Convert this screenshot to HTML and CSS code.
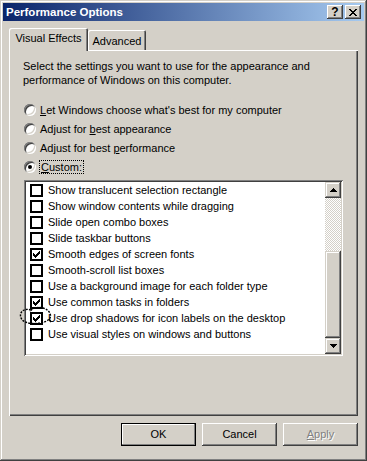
FILE: index.html
```html
<!DOCTYPE html>
<html lang="en">
<head>
    <meta charset="UTF-8">
    <title>Performance Options</title>
    <link rel="stylesheet" href="styles.css">
</head>
<body>

<div class="window">
    <div class="titlebar">
        <span class="title">Performance Options</span>
        <div class="caption-buttons">
            <div class="caption-btn help">?</div>
            <div class="caption-btn">
                <svg width="8" height="7" viewBox="0 0 8 7"><path d="M0 0h2v1h-2zM6 0h2v1h-2zM1 1h2v1h-2zM5 1h2v1h-2zM2 2h4v1h-4zM3 3h2v1h-2zM2 4h4v1h-4zM1 5h2v1h-2zM5 5h2v1h-2zM0 6h2v1h-2zM6 6h2v1h-2z" fill="#000"/></svg>
            </div>
        </div>
    </div>

    <div class="client">
        <div class="tabs">
            <div class="tab active">Visual Effects</div>
            <div class="tab">Advanced</div>
        </div>

        <div class="panel">
            <p class="intro">Select the settings you want to use for the appearance and<br>performance of Windows on this computer.</p>

            <div class="options">
                <div class="option"><span class="radio"></span><span><u>L</u>et Windows choose what's best for my computer</span></div>
                <div class="option"><span class="radio"></span><span>Adjust for <u>b</u>est appearance</span></div>
                <div class="option"><span class="radio"></span><span>Adjust for best <u>p</u>erformance</span></div>
                <div class="option"><span class="radio checked"></span><span class="focus"><u>C</u>ustom:</span></div>
            </div>

            <div class="listbox">
                <ul class="effects">
                    <li class="effect"><span class="check"></span>Show translucent selection rectangle</li>
                    <li class="effect"><span class="check"></span>Show window contents while dragging</li>
                    <li class="effect"><span class="check"></span>Slide open combo boxes</li>
                    <li class="effect"><span class="check"></span>Slide taskbar buttons</li>
                    <li class="effect"><span class="check on"><svg width="7" height="7" viewBox="0 0 7 7"><path d="M6 0h1v1h-1zM5 1h2v1h-2zM0 2h1v1h-1zM4 2h3v1h-3zM0 3h2v1h-2zM3 3h3v1h-3zM0 4h5v1h-5zM1 5h3v1h-3zM2 6h1v1h-1z"/></svg></span>Smooth edges of screen fonts</li>
                    <li class="effect"><span class="check"></span>Smooth-scroll list boxes</li>
                    <li class="effect"><span class="check"></span>Use a background image for each folder type</li>
                    <li class="effect"><span class="check on"><svg width="7" height="7" viewBox="0 0 7 7"><path d="M6 0h1v1h-1zM5 1h2v1h-2zM0 2h1v1h-1zM4 2h3v1h-3zM0 3h2v1h-2zM3 3h3v1h-3zM0 4h5v1h-5zM1 5h3v1h-3zM2 6h1v1h-1z"/></svg></span>Use common tasks in folders</li>
                    <li class="effect lassoed">
                        <span class="check on"><svg width="7" height="7" viewBox="0 0 7 7"><path d="M6 0h1v1h-1zM5 1h2v1h-2zM0 2h1v1h-1zM4 2h3v1h-3zM0 3h2v1h-2zM3 3h3v1h-3zM0 4h5v1h-5zM1 5h3v1h-3zM2 6h1v1h-1z"/></svg></span>Use drop shadows for icon labels on the desktop
                        <svg class="lasso" width="34" height="22" viewBox="0 0 34 22"><path d="M12 4C6 2 1 5 1.5 10C2 15 8 18 16 17.5C24 17 31 15 31.5 10.5C32 6 27 1.5 20 1.5C15 1.5 12 3 11.5 6" fill="none" stroke="#000" stroke-width="1.4" stroke-dasharray="2 1.2"/><path d="M30 13l2 3" stroke="#000" stroke-width="1.4" fill="none"/></svg>
                    </li>
                    <li class="effect"><span class="check"></span>Use visual styles on windows and buttons</li>
                </ul>
                <div class="scrollbar">
                    <div class="sb-btn">
                        <svg width="7" height="4" viewBox="0 0 7 4"><path d="M3 0h1v1h-1zM2 1h3v1h-3zM1 2h5v1h-5zM0 3h7v1h-7z"/></svg>
                    </div>
                    <div class="sb-track"></div>
                    <div class="sb-thumb"></div>
                    <div class="sb-btn">
                        <svg width="7" height="4" viewBox="0 0 7 4"><path d="M0 0h7v1h-7zM1 1h5v1h-5zM2 2h3v1h-3zM3 3h1v1h-1z"/></svg>
                    </div>
                </div>
            </div>
        </div>

        <div class="actions">
            <div class="btn default">OK</div>
            <div class="btn">Cancel</div>
            <div class="btn disabled"><u>A</u>pply</div>
        </div>
    </div>
</div>

</body>
</html>
```

FILE: styles.css
```css
body {
    margin: 0;
    font-family: "Liberation Sans", Arial, sans-serif;
    font-size: 11px;
    color: #000;
}
.window {
    width: 367px;
    height: 461px;
    box-sizing: border-box;
    padding: 3px;
    background: #d4d0c8;
    box-shadow: inset -1px -1px #404040, inset 1px 1px #d4d0c8, inset -2px -2px #808080, inset 2px 2px #fff;
}

/* title bar */
.titlebar {
    height: 18px;
    display: flex;
    align-items: center;
    justify-content: space-between;
    padding: 0 3px 0 3px;
    background: linear-gradient(to right, #0a246a, #a6caf0);
}
.title {
    color: #fff;
    font-weight: bold;
    font-size: 11.5px;
}
.caption-buttons {
    display: flex;
    gap: 2px;
}
.caption-btn {
    width: 16px;
    height: 14px;
    box-sizing: border-box;
    display: flex;
    align-items: center;
    justify-content: center;
    background: #d4d0c8;
    box-shadow: inset -1px -1px #404040, inset 1px 1px #fff, inset -2px -2px #808080;
}
.caption-btn.help {
    font-weight: bold;
    font-size: 12px;
    line-height: 14px;
}

/* tabs */
.client {
    padding: 7px 6px 0 6px;
}
.tabs {
    display: flex;
    align-items: flex-end;
    height: 22px;
}
.tab {
    box-sizing: border-box;
    height: 20px;
    padding-top: 4px;
    text-align: center;
    border-radius: 2px 2px 0 0;
    box-shadow: inset 1px 1px #fff, inset -1px 0 #404040, inset -2px 0 #808080;
}
.tab.active {
    width: 79px;
    height: 23px;
    margin-bottom: -1px;
    padding-top: 4px;
    position: relative;
    z-index: 1;
    background: #d4d0c8;
}
.tab:not(.active) {
    width: 58px;
    padding-top: 5px;
}

/* panel */
.panel {
    height: 366px;
    box-sizing: border-box;
    padding: 9px 15px 0 14px;
    box-shadow: inset 1px 1px #fff, inset -1px -1px #404040, inset -2px -2px #808080;
}
.intro {
    margin: 0 0 13px 0;
    line-height: 14px;
}
.option {
    display: flex;
    align-items: center;
    gap: 4px;
    height: 19px;
    margin-left: 1px;
}
.radio {
    width: 12px;
    height: 12px;
    border-radius: 50%;
    background: #fff;
    display: flex;
    align-items: center;
    justify-content: center;
    box-shadow: inset 1px 1px #808080, inset -1px -1px #fff, inset 2px 2px #404040, inset -2px -2px #d4d0c8;
}
.radio.checked::after {
    content: "";
    width: 4px;
    height: 4px;
    border-radius: 50%;
    background: #000;
}
.focus {
    outline: 1px dotted #000;
    padding: 0 1px;
}

/* list box */
.listbox {
    display: flex;
    height: 176px;
    width: 319px;
    box-sizing: border-box;
    margin: 4px 0 0 1px;
    padding: 2px;
    background: #fff;
    box-shadow: inset 1px 1px #808080, inset -1px -1px #fff, inset 2px 2px #404040, inset -2px -2px #d4d0c8;
}
.effects {
    flex: 1;
    margin: 0;
    padding: 0;
    list-style: none;
}
.effect {
    display: flex;
    align-items: center;
    gap: 5px;
    height: 16px;
    padding-left: 4px;
    white-space: nowrap;
}
.lassoed {
    position: relative;
}
.lasso {
    position: absolute;
    left: -7px;
    top: -4px;
}
.check {
    width: 13px;
    height: 13px;
    box-sizing: border-box;
    border: 2px solid #000;
    background: #fff;
    display: flex;
    align-items: center;
    justify-content: center;
}
.scrollbar {
    width: 16px;
    display: flex;
    flex-direction: column;
}
.sb-btn, .sb-thumb {
    box-sizing: border-box;
    background: #d4d0c8;
    box-shadow: inset -1px -1px #404040, inset 1px 1px #d4d0c8, inset -2px -2px #808080, inset 2px 2px #fff;
}
.sb-btn {
    height: 16px;
    display: flex;
    align-items: center;
    justify-content: center;
}
.sb-track {
    height: 53px;
    background: repeating-conic-gradient(#d4d0c8 0 25%, #fff 0 50%) 0 0 / 2px 2px;
}
.sb-thumb {
    height: 87px;
}

/* buttons */
.actions {
    display: flex;
    justify-content: flex-end;
    gap: 6px;
    margin-top: 7px;
}
.btn {
    width: 75px;
    height: 23px;
    line-height: 23px;
    text-align: center;
    background: #d4d0c8;
    box-shadow: inset -1px -1px #404040, inset 1px 1px #fff, inset -2px -2px #808080;
}
.btn.default {
    box-shadow: inset 0 0 0 1px #000, inset -2px -2px #808080, inset 2px 2px #fff;
}
.btn.disabled {
    color: #808080;
    text-shadow: 1px 1px #fff;
}
```
